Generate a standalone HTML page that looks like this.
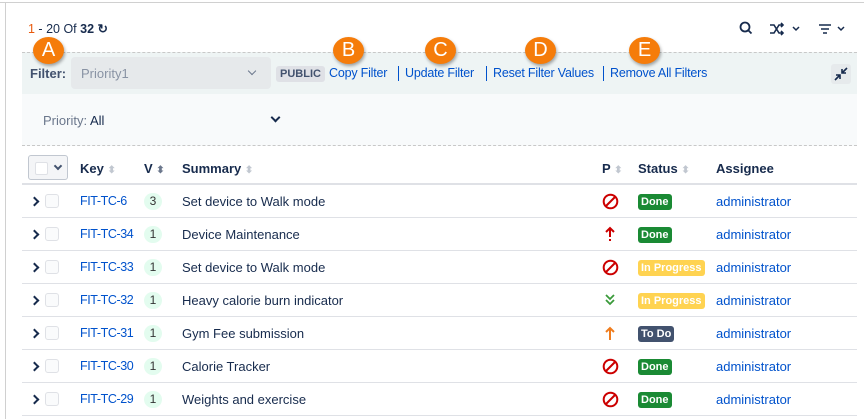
<!DOCTYPE html>
<html><head><meta charset="utf-8"><style>
*{box-sizing:border-box;margin:0;padding:0}
body{width:864px;height:419px;background:#fff;font-family:"Liberation Sans",Arial,sans-serif;position:relative;overflow:hidden;color:#172b4d}
.abs{position:absolute}
.a{color:#0052cc}
.circ{position:absolute;width:31px;height:27px;border-radius:50%;background:#f57c0a;color:#fff;font-size:20px;text-align:center;line-height:27px;box-shadow:1px 2px 3px rgba(0,0,0,.35)}
.row{position:absolute;left:22px;width:835px;height:33px;border-bottom:1px solid #dfe1e6;font-size:13px}
.row>*{position:absolute;top:9px}
.chev{left:9px;top:13px;width:7px;height:7px;border-right:2.5px solid #172b4d;border-bottom:2.5px solid #172b4d;transform:rotate(-45deg)}
.cb{left:23px;top:9px;width:14px;height:14px;border:1px solid #dfe1e6;border-radius:3px;background:#fafbfc}
.key{left:58px;font-size:12.5px;letter-spacing:-0.4px}
.v{left:122px;top:8px;width:18px;height:17px;border-radius:9px;background:#e3fcef;text-align:center;line-height:17px;font-size:12px;color:#333}
.sum{left:160px}
.lz{left:601px;top:10px}
.st{left:616px;top:9px;height:16px;padding:0 3px;border-radius:3px;color:#fff;font-weight:bold;font-size:11px;line-height:16px}
.done{background:#1a8a34}.ip{background:#ffd351}.td{background:#42526e}
.asg{left:694px}
.lk{position:absolute;top:66px;font-size:12.5px;letter-spacing:-0.2px;color:#0052cc}
.sep{position:absolute;top:66px;width:1px;height:15px;background:#0052cc}
</style></head><body>
<div class="abs" style="left:0;top:2px;width:864px;height:1px;background:#d0d0d0"></div>
<div class="abs" style="left:5px;top:2px;width:1px;height:417px;background:#d0d0d0"></div>
<div class="abs" style="left:28px;top:21px;font-size:12.5px"><span style="color:#e8590c">1</span> - <span>20</span> Of <b>32</b> <span style="font-weight:bold">↻</span></div>
<svg class="abs" style="left:738px;top:20px" width="120" height="18" viewBox="0 0 120 18"><circle cx="7" cy="7" r="4.5" fill="none" stroke="#172b4d" stroke-width="1.8"/><path d="M10.5 10.5l3 3" stroke="#172b4d" stroke-width="1.8"/><path d="M32 5h4l5 8h4M32 13h4l5-8h4M43 3l2 2-2 2M43 11l2 2-2 2" fill="none" stroke="#172b4d" stroke-width="1.6"/><path d="M55 7l3 3 3-3" fill="none" stroke="#172b4d" stroke-width="1.5"/><path d="M81 5h12M83 9h8M85 13h4" stroke="#172b4d" stroke-width="1.5"/><path d="M100 7l3 3 3-3" fill="none" stroke="#172b4d" stroke-width="1.5"/></svg>
<div class="abs" style="left:22px;top:52px;width:835px;height:42px;background:#eef4f4;border-top:1px dashed #c8c8c8"></div>
<div class="abs" style="left:22px;top:94px;width:835px;height:52px;background:#f8fafb;border-bottom:1px dashed #c8c8c8"></div>
<div class="abs" style="left:30px;top:66px;font-size:13px;font-weight:bold;color:#42526e">Filter:</div>
<div class="abs" style="left:71px;top:57px;width:200px;height:32px;background:#e6e9eb;border-radius:4px;color:#8993a4;font-size:13px;padding:9px 10px">Priority1<div style="position:absolute;right:16px;top:11px;width:6px;height:6px;border-right:1.5px solid #6b778c;border-bottom:1.5px solid #6b778c;transform:rotate(45deg)"></div></div>
<div class="abs" style="left:276px;top:66px;background:#dfe1e6;color:#42526e;font-weight:bold;font-size:11px;padding:2px 4px;border-radius:3px">PUBLIC</div>
<span class="lk" style="left:329px">Copy Filter</span><i class="sep" style="left:398px"></i>
<span class="lk" style="left:405px">Update Filter</span><i class="sep" style="left:486px"></i>
<span class="lk" style="left:493px">Reset Filter Values</span><i class="sep" style="left:603px"></i>
<span class="lk" style="left:610px">Remove All Filters</span>
<div class="abs" style="left:831px;top:64px;width:20px;height:20px;background:#e6eaec;border-radius:3px"><svg width="20" height="20"><path d="M4 16l5-5M5 11h4v4M16 4l-5 5M11 5v4h4" fill="none" stroke="#172b4d" stroke-width="1.6"/></svg></div>
<div class="abs" style="left:43px;top:113px;font-size:13px;color:#6b778c">Priority: <span style="color:#172b4d">All</span></div>
<div class="abs" style="left:272px;top:114px;width:7px;height:7px;border-right:2px solid #172b4d;border-bottom:2px solid #172b4d;transform:rotate(45deg)"></div>
<div class="circ" style="left:33px;top:37px">A</div>
<div class="circ" style="left:333px;top:37px">B</div>
<div class="circ" style="left:425px;top:37px">C</div>
<div class="circ" style="left:525px;top:37px">D</div>
<div class="circ" style="left:629px;top:37px">E</div>
<div class="abs" style="left:22px;top:152px;width:835px;height:33px;border-bottom:2px solid #dfe1e6;font-size:13px;font-weight:bold">
<div class="abs" style="left:6px;top:3px;width:40px;height:25px;border:1px solid #c1c7d0;border-radius:3px;background:#f4f5f7"><div style="position:absolute;left:6px;top:6px;width:13px;height:13px;border:1px solid #dfe1e6;background:#fff;border-radius:2px"></div><div style="position:absolute;left:26px;top:7px;width:6px;height:6px;border-right:2px solid #42526e;border-bottom:2px solid #42526e;transform:rotate(45deg)"></div></div>
<div class="abs" style="left:58px;top:9px">Key <span style="color:#c1c7d0;font-size:10px">⬍</span></div>
<div class="abs" style="left:122px;top:9px">V <span style="color:#6b778c;font-size:10px">⬍</span></div>
<div class="abs" style="left:160px;top:9px">Summary <span style="color:#c1c7d0;font-size:10px">⬍</span></div>
<div class="abs" style="left:580px;top:9px">P <span style="color:#c1c7d0;font-size:10px">⬍</span></div>
<div class="abs" style="left:616px;top:9px">Status <span style="color:#c1c7d0;font-size:10px">⬍</span></div>
<div class="abs" style="left:694px;top:9px">Assignee</div>
</div>
<div class="row" style="top:185px"><i class="chev"></i><i class="cb"></i><span class="key a">FIT-TC-6</span><span class="v">3</span><span class="sum">Set device to Walk mode</span><svg class="lz" style="left:580px;top:8px" width="17" height="17"><circle cx="8.5" cy="8.5" r="6.8" fill="none" stroke="#c00" stroke-width="2"/><path d="M4 13L13 4" stroke="#c00" stroke-width="2"/></svg><span class="st done">Done</span><span class="asg a">administrator</span></div>
<div class="row" style="top:218px"><i class="chev"></i><i class="cb"></i><span class="key a">FIT-TC-34</span><span class="v">1</span><span class="sum">Device Maintenance</span><svg class="lz" style="left:582px;top:8px" width="12" height="17"><path d="M6 2v9M2 6l4-4 4 4M6 13v2" fill="none" stroke="#c00" stroke-width="2"/></svg><span class="st done">Done</span><span class="asg a">administrator</span></div>
<div class="row" style="top:251px"><i class="chev"></i><i class="cb"></i><span class="key a">FIT-TC-33</span><span class="v">1</span><span class="sum">Set device to Walk mode</span><svg class="lz" style="left:580px;top:8px" width="17" height="17"><circle cx="8.5" cy="8.5" r="6.8" fill="none" stroke="#c00" stroke-width="2"/><path d="M4 13L13 4" stroke="#c00" stroke-width="2"/></svg><span class="st ip">In Progress</span><span class="asg a">administrator</span></div>
<div class="row" style="top:284px"><i class="chev"></i><i class="cb"></i><span class="key a">FIT-TC-32</span><span class="v">1</span><span class="sum">Heavy calorie burn indicator</span><svg class="lz" style="left:582px;top:8px" width="12" height="17"><path d="M2 3l4 4 4-4M2 8l4 4 4-4" fill="none" stroke="#3a9a3a" stroke-width="1.8"/></svg><span class="st ip">In Progress</span><span class="asg a">administrator</span></div>
<div class="row" style="top:317px"><i class="chev"></i><i class="cb"></i><span class="key a">FIT-TC-31</span><span class="v">1</span><span class="sum">Gym Fee submission</span><svg class="lz" style="left:582px;top:8px" width="12" height="17"><path d="M6 3v12M2 7l4-4 4 4" fill="none" stroke="#f07d1e" stroke-width="2"/></svg><span class="st td">To Do</span><span class="asg a">administrator</span></div>
<div class="row" style="top:350px"><i class="chev"></i><i class="cb"></i><span class="key a">FIT-TC-30</span><span class="v">1</span><span class="sum">Calorie Tracker</span><svg class="lz" style="left:580px;top:8px" width="17" height="17"><circle cx="8.5" cy="8.5" r="6.8" fill="none" stroke="#c00" stroke-width="2"/><path d="M4 13L13 4" stroke="#c00" stroke-width="2"/></svg><span class="st done">Done</span><span class="asg a">administrator</span></div>
<div class="row" style="top:383px"><i class="chev"></i><i class="cb"></i><span class="key a">FIT-TC-29</span><span class="v">1</span><span class="sum">Weights and exercise</span><svg class="lz" style="left:580px;top:8px" width="17" height="17"><circle cx="8.5" cy="8.5" r="6.8" fill="none" stroke="#c00" stroke-width="2"/><path d="M4 13L13 4" stroke="#c00" stroke-width="2"/></svg><span class="st done">Done</span><span class="asg a">administrator</span></div>
</body></html>
